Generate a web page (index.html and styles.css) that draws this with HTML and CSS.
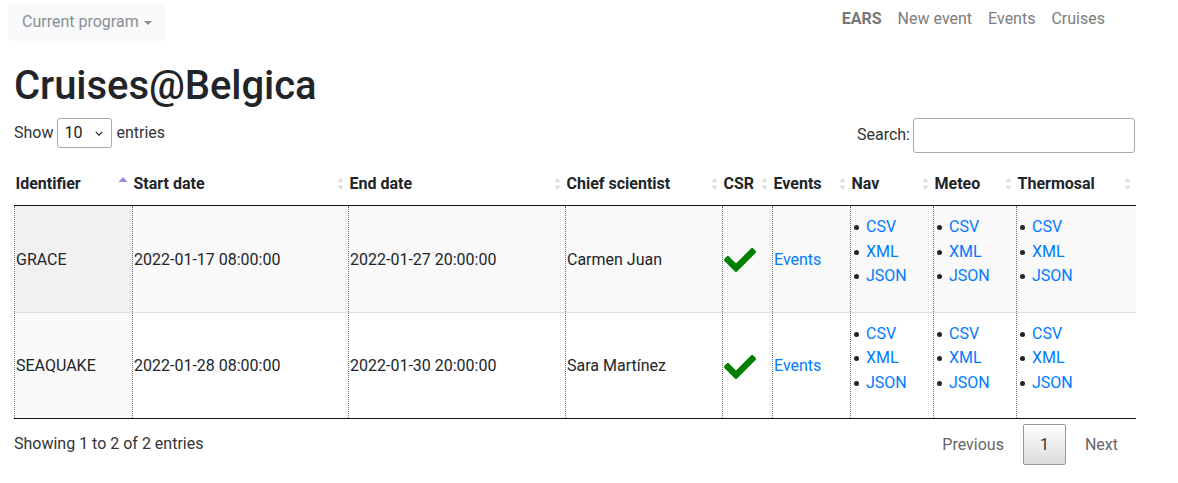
FILE: index.html
```html
<!DOCTYPE html>
<html lang="en">
<head>
<meta charset="utf-8">
<title>Cruises@Belgica</title>
<link rel="stylesheet" href="styles.css">
</head>
<body>
<nav class="navbar">
  <button class="prog-btn" type="button">Current program<span class="caret"></span></button>
  <ul class="nav">
    <li><a class="nav-link brand" href="#">EARS</a></li>
    <li><a class="nav-link" href="#">New event</a></li>
    <li><a class="nav-link" href="#">Events</a></li>
    <li><a class="nav-link" href="#">Cruises</a></li>
  </ul>
</nav>
<main class="content">
  <h1 class="title">Cruises@Belgica</h1>
  <div class="dt-top">
    <div class="dt-length">Show <span class="select">10<svg class="chev" viewBox="0 0 10 6" width="8" height="5"><path d="M1 1l4 4 4-4" fill="none" stroke="#222" stroke-width="1.5"/></svg></span> entries</div>
    <div class="dt-filter">Search:<span class="search-input"></span></div>
  </div>
  <table class="dt">
    <colgroup>
      <col class="c-id"><col class="c-start"><col class="c-end"><col class="c-chief"><col class="c-csr"><col class="c-ev"><col class="c-nav"><col class="c-met"><col class="c-thermo">
    </colgroup>
    <thead>
      <tr>
        <th><div class="th-in"><span>Identifier</span><svg class="sort" width="10" height="16" viewBox="0 0 10 16"><polygon points="0.5,6 5,1 9.5,6" fill="#8f8fe3"/></svg></div></th>
        <th><div class="th-in"><span>Start date</span><svg class="sort" width="7" height="16" viewBox="0 0 7 16"><polygon points="0.5,6 3.5,1.5 6.5,6" fill="#dedede"/><polygon points="0.5,9.5 3.5,14 6.5,9.5" fill="#dedede"/></svg></div></th>
        <th><div class="th-in"><span>End date</span><svg class="sort" width="7" height="16" viewBox="0 0 7 16"><polygon points="0.5,6 3.5,1.5 6.5,6" fill="#dedede"/><polygon points="0.5,9.5 3.5,14 6.5,9.5" fill="#dedede"/></svg></div></th>
        <th><div class="th-in"><span>Chief scientist</span><svg class="sort" width="7" height="16" viewBox="0 0 7 16"><polygon points="0.5,6 3.5,1.5 6.5,6" fill="#dedede"/><polygon points="0.5,9.5 3.5,14 6.5,9.5" fill="#dedede"/></svg></div></th>
        <th><div class="th-in"><span>CSR</span><svg class="sort" width="7" height="16" viewBox="0 0 7 16"><polygon points="0.5,6 3.5,1.5 6.5,6" fill="#dedede"/><polygon points="0.5,9.5 3.5,14 6.5,9.5" fill="#dedede"/></svg></div></th>
        <th><div class="th-in"><span>Events</span><svg class="sort" width="7" height="16" viewBox="0 0 7 16"><polygon points="0.5,6 3.5,1.5 6.5,6" fill="#dedede"/><polygon points="0.5,9.5 3.5,14 6.5,9.5" fill="#dedede"/></svg></div></th>
        <th><div class="th-in"><span>Nav</span><svg class="sort" width="7" height="16" viewBox="0 0 7 16"><polygon points="0.5,6 3.5,1.5 6.5,6" fill="#dedede"/><polygon points="0.5,9.5 3.5,14 6.5,9.5" fill="#dedede"/></svg></div></th>
        <th><div class="th-in"><span>Meteo</span><svg class="sort" width="7" height="16" viewBox="0 0 7 16"><polygon points="0.5,6 3.5,1.5 6.5,6" fill="#dedede"/><polygon points="0.5,9.5 3.5,14 6.5,9.5" fill="#dedede"/></svg></div></th>
        <th><div class="th-in"><span>Thermosal</span><svg class="sort" width="7" height="16" viewBox="0 0 7 16"><polygon points="0.5,6 3.5,1.5 6.5,6" fill="#dedede"/><polygon points="0.5,9.5 3.5,14 6.5,9.5" fill="#dedede"/></svg></div></th>
      </tr>
    </thead>
    <tbody>
      <tr class="odd">
        <td class="sorted">GRACE</td>
        <td>2022-01-17 08:00:00</td>
        <td>2022-01-27 20:00:00</td>
        <td>Carmen Juan</td>
        <td><svg class="check" width="32" height="32" viewBox="0 0 512 512"><path fill="#008000" d="M173.898 439.404l-166.4-166.4c-9.997-9.997-9.997-26.206 0-36.204l36.203-36.204c9.997-9.998 26.207-9.998 36.204 0L192 312.69 432.095 72.596c9.997-9.997 26.207-9.997 36.204 0l36.203 36.204c9.997 9.997 9.997 26.206 0 36.204l-294.4 294.401c-9.998 9.997-26.207 9.997-36.204-.001z"/></svg></td>
        <td><a href="#">Events</a></td>
        <td><ul class="fmt"><li><a href="#">CSV</a></li><li><a href="#">XML</a></li><li><a href="#">JSON</a></li></ul></td>
        <td><ul class="fmt"><li><a href="#">CSV</a></li><li><a href="#">XML</a></li><li><a href="#">JSON</a></li></ul></td>
        <td><ul class="fmt"><li><a href="#">CSV</a></li><li><a href="#">XML</a></li><li><a href="#">JSON</a></li></ul></td>
      </tr>
      <tr class="even">
        <td class="sorted">SEAQUAKE</td>
        <td>2022-01-28 08:00:00</td>
        <td>2022-01-30 20:00:00</td>
        <td>Sara Martínez</td>
        <td><svg class="check" width="32" height="32" viewBox="0 0 512 512"><path fill="#008000" d="M173.898 439.404l-166.4-166.4c-9.997-9.997-9.997-26.206 0-36.204l36.203-36.204c9.997-9.998 26.207-9.998 36.204 0L192 312.69 432.095 72.596c9.997-9.997 26.207-9.997 36.204 0l36.203 36.204c9.997 9.997 9.997 26.206 0 36.204l-294.4 294.401c-9.998 9.997-26.207 9.997-36.204-.001z"/></svg></td>
        <td><a href="#">Events</a></td>
        <td><ul class="fmt"><li><a href="#">CSV</a></li><li><a href="#">XML</a></li><li><a href="#">JSON</a></li></ul></td>
        <td><ul class="fmt"><li><a href="#">CSV</a></li><li><a href="#">XML</a></li><li><a href="#">JSON</a></li></ul></td>
        <td><ul class="fmt"><li><a href="#">CSV</a></li><li><a href="#">XML</a></li><li><a href="#">JSON</a></li></ul></td>
      </tr>
    </tbody>
  </table>
  <div class="dt-bottom">
    <div class="dt-info">Showing 1 to 2 of 2 entries</div>
    <div class="dt-paginate">
      <span class="pg disabled">Previous</span>
      <span class="pg current">1</span>
      <span class="pg disabled">Next</span>
    </div>
  </div>
</main>
</body>
</html>
```

FILE: styles.css
```css
* { box-sizing: border-box; }

html, body {
  margin: 0;
  padding: 0;
  background: #fff;
}

body {
  font-family: Roboto, "Liberation Sans", Arial, sans-serif;
  font-size: 16px;
  line-height: 1.5;
  color: #212529;
}

a {
  color: #007bff;
  text-decoration: none;
}

/* ---------- navbar ---------- */
.navbar {
  display: flex;
  justify-content: space-between;
  align-items: flex-start;
  padding: 3px 65px 3px 8px;
  height: 44px;
}

.prog-btn {
  display: inline-flex;
  align-items: center;
  height: 38px;
  padding: 6px 12px 6px 13px;
  background: #f8f9fa;
  border: 1px solid #f8f9fa;
  border-radius: 4px;
  font-family: inherit;
  font-size: 16px;
  line-height: 24px;
  color: #8a8f94;
}

.caret {
  display: inline-block;
  margin-left: 5px;
  margin-top: 1px;
  width: 0;
  height: 0;
  border-top: 4.5px solid #8a8f94;
  border-left: 4px solid transparent;
  border-right: 4px solid transparent;
}

.nav {
  display: flex;
  list-style: none;
  margin: 0;
  padding: 4px 0 0;
}

.nav-link {
  display: block;
  padding: 0 8px;
  line-height: 24px;
  color: #7d7d7d;
}

.brand {
  font-weight: 700;
  color: #777;
}

/* ---------- content ---------- */
.content {
  width: 1121px;
  margin-left: 14px;
}

.title {
  margin: 18px 0 7px;
  font-size: 40px;
  font-weight: 500;
  line-height: 1.2;
  color: #212529;
  letter-spacing: -0.05px;
}

.dt-top {
  display: flex;
  justify-content: space-between;
  align-items: center;
  height: 36px;
}

.dt-length {
  display: flex;
  align-items: center;
  gap: 4px;
  margin-top: -4px;
  color: #333;
}

.select {
  display: inline-flex;
  align-items: center;
  justify-content: space-between;
  width: 55px;
  height: 30px;
  padding: 0 8px 0 6px;
  border: 1px solid #aaa;
  border-radius: 3px;
  background: #fff;
  color: #222;
}

.chev { margin-top: 1px; }

.dt-filter {
  display: flex;
  align-items: center;
  gap: 3px;
  color: #333;
}

.search-input {
  display: block;
  width: 222px;
  height: 35px;
  border: 1px solid #aaa;
  border-radius: 3px;
  background: #fff;
}

/* ---------- table ---------- */
.dt {
  width: 1121px;
  margin-top: 8px;
  border-collapse: collapse;
  table-layout: fixed;
}

.c-id { width: 118px; }
.c-start { width: 216px; }
.c-end { width: 217px; }
.c-chief { width: 157px; }
.c-csr { width: 50px; }
.c-ev { width: 78px; }
.c-nav { width: 83px; }
.c-met { width: 83px; }
.c-thermo { width: 119px; }

.dt th {
  padding: 11px 5px 9px 1px;
  text-align: left;
  font-weight: 700;
  color: #212529;
  border-bottom: 1px solid #111;
  white-space: nowrap;
}

.th-in {
  display: flex;
  justify-content: space-between;
  align-items: center;
}

.sort { flex: none; }

.dt td {
  padding: 9px 1px 7px;
  vertical-align: middle;
  border-left: 1px dotted #707070;
  color: #212529;
}

.dt tbody tr + tr td {
  border-top: 1px solid #ddd;
}

.dt tbody tr:last-child td {
  border-bottom: 1px solid #111;
}

.dt tr.odd td { background: #f9f9f9; }
.dt tr.odd td.sorted { background: #f1f1f1; }
.dt tr.even td { background: #fff; }
.dt tr.even td.sorted { background: #fafafa; }

.check {
  display: block;
  margin-top: 1px;
}

.fmt {
  margin: 0 0 16px;
  padding-left: 2px;
  list-style: none;
}

.fmt li {
  display: flex;
  align-items: center;
  line-height: 24.5px;
}

.fmt li::before {
  content: "";
  flex: none;
  width: 5px;
  height: 5px;
  margin: 1px 7px 0 0;
  border-radius: 50%;
  background: #212529;
}

/* ---------- bottom ---------- */
.dt-bottom {
  display: flex;
  justify-content: space-between;
  align-items: flex-start;
}

.dt-info {
  padding-top: 13px;
  color: #333;
}

.dt-paginate {
  display: flex;
  padding-top: 5px;
}

.pg {
  display: inline-block;
  min-width: 24px;
  padding: 8px 16px;
  margin-left: 2px;
  border: 1px solid transparent;
  border-radius: 2px;
  line-height: 23px;
  text-align: center;
  color: #666;
}

.pg.current {
  color: #333;
  border: 1px solid #979797;
  background: linear-gradient(to bottom, #fff 0%, #dcdcdc 100%);
}
```
